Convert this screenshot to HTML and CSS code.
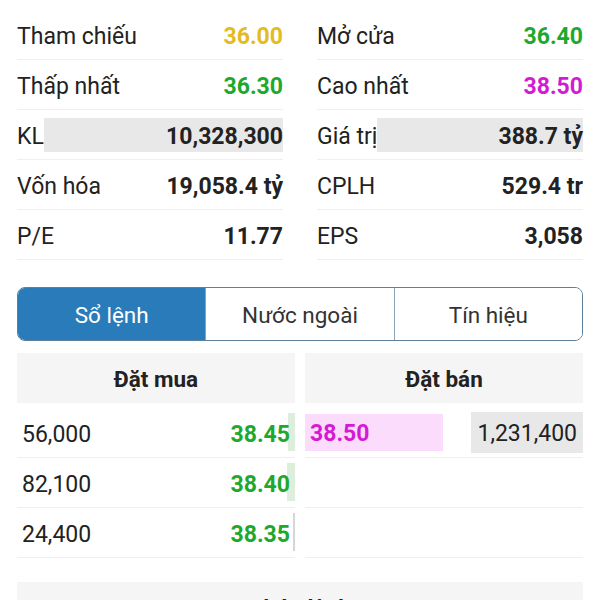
FILE: index.html
```html
<!DOCTYPE html>
<html lang="vi">

<head>
  <meta charset="UTF-8" />
  <meta name="viewport" content="width=device-width, initial-scale=1.0"/>
  <title>Chi tiết cổ phiếu</title>
  <link rel="stylesheet" href="styles.css">
</head>

<body>
  <div class="stats">
    <div class="col">
      <div class="row"><span class="label">Tham chiếu</span><span class="val ref">36.00</span></div>
      <div class="row"><span class="label">Thấp nhất</span><span class="val up">36.30</span></div>
      <div class="row"><span class="label">KL</span><span class="val bar">10,328,300</span></div>
      <div class="row"><span class="label">Vốn hóa</span><span class="val">19,058.4 tỷ</span></div>
      <div class="row"><span class="label">P/E</span><span class="val">11.77</span></div>
    </div>
    <div class="col">
      <div class="row"><span class="label">Mở cửa</span><span class="val up">36.40</span></div>
      <div class="row"><span class="label">Cao nhất</span><span class="val ceil">38.50</span></div>
      <div class="row"><span class="label">Giá trị</span><span class="val bar">388.7 tỷ</span></div>
      <div class="row"><span class="label">CPLH</span><span class="val">529.4 tr</span></div>
      <div class="row"><span class="label">EPS</span><span class="val">3,058</span></div>
    </div>
  </div>

  <div class="tabs">
    <div class="tab active">Sổ lệnh</div>
    <div class="tab">Nước ngoài</div>
    <div class="tab">Tín hiệu</div>
  </div>

  <div class="book">
    <div class="side buy">
      <div class="head">Đặt mua</div>
      <div class="line"><span class="qty">56,000</span><span class="price up">38.45</span><i class="vol" style="width:7px"></i></div>
      <div class="line"><span class="qty">82,100</span><span class="price up">38.40</span><i class="vol" style="width:8px"></i></div>
      <div class="line"><span class="qty">24,400</span><span class="price up">38.35</span><i class="vol thin" style="width:2px"></i></div>
    </div>
    <div class="side sell">
      <div class="head">Đặt bán</div>
      <div class="line"><span class="price ceil pink">38.50</span><span class="qty grey">1,231,400</span></div>
      <div class="line"></div>
      <div class="line"></div>
    </div>
  </div>

  <div class="matched">
    <div class="head">Khớp lệnh</div>
  </div>
</body>

</html>
```

FILE: styles.css
```css
body { margin: 0; padding: 10px 17px 0; font-family: Roboto, 'Noto Sans', sans-serif; color: #222; background: #fff; }

/* thong tin co phieu */
.stats { display: grid; grid-template-columns: 1fr 1fr; column-gap: 34px; }
.row {
  display: flex;
  align-items: center;
  justify-content: space-between;
  height: 45px;
  padding-top: 4px;
  border-bottom: 1px solid #efefef;
  font-size: 23px;
}
.val { font-weight: bold; }
.val.bar { flex: 1; height: 30px; line-height: 30px; margin-top: -4px; padding-top: 4px; text-align: right; background: #e8e8e8; }
.ref { color: #e3bb22; }
.up { color: #1fa82e; }
.ceil { color: #d41bd4; }

/* tab */
.tabs {
  display: flex;
  margin-top: 27px;
  height: 52px;
  border: 1.5px solid #5c7f9b;
  border-radius: 8px;
  overflow: hidden;
}
.tab {
  flex: 1;
  display: flex;
  align-items: center;
  justify-content: center;
  padding-top: 2px;
  font-size: 22.5px;
  color: #333;
  background: #fff;
  border-left: 1px solid #8aa3b6;
}
.tab:first-child { border-left: none; }
.tab.active { background: #2a7bb9; color: #fff; }

/* so lenh */
.book { display: grid; grid-template-columns: 1fr 1fr; column-gap: 10px; margin-top: 12px; }
.head {
  height: 50px;
  line-height: 52px;
  text-align: center;
  font-weight: bold;
  font-size: 22.5px;
  background: #f5f5f5;
  margin-bottom: 5px;
}
.line {
  position: relative;
  display: flex;
  align-items: center;
  justify-content: space-between;
  height: 49px;
  border-bottom: 1px solid #efefef;
  font-size: 23px;
}
.buy .qty { padding-left: 5px; padding-top: 3px; }
.buy .price { padding-right: 5px; padding-top: 3px; font-weight: bold; position: relative; z-index: 1; }
.vol { position: absolute; right: 0; top: 5px; height: 38px; background: #ddeedd; }
.vol.thin { background: #d6d6d6; }
.sell .price { font-weight: bold; }
.pink { width: 133px; height: 37px; line-height: 40px; padding-left: 5px; background: #fcdcfc; }
.grey { height: 41px; line-height: 43px; padding: 0 6px; background: #e8e8e8; }

.matched { margin-top: 24px; }
```
